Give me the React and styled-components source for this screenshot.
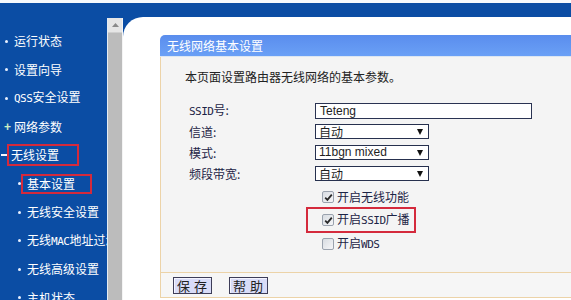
import React from "react";
import styled, { createGlobalStyle } from "styled-components";

const GlobalStyle = createGlobalStyle`
  html, body { margin: 0; padding: 0; background: #f6f9fc; overflow: hidden; }
  body { font-family: "Noto Sans CJK SC", "Liberation Sans", sans-serif; font-size: 12px; }
  * { box-sizing: border-box; }
`;

const BLUE = "#0b4da4";
const RED = "#d42a3c";
const TAN = "#ecd3a8";
const INK = "#1d2446";

const Page = styled.div`
  padding-top: 3px;
  width: 571px;
  height: 300px;
`;

const Frame = styled.div`
  background: ${BLUE};
  height: 297px;
  display: flex;
  flex-direction: column;
`;

const TopBand = styled.div`
  height: 14px;
  flex: none;
`;

const MainRow = styled.div`
  flex: 1;
  display: flex;
  min-height: 0;
`;

const Sidebar = styled.nav`
  width: 107px;
  flex: none;
  overflow: hidden;
  padding-top: 10px;
  color: #fff;
`;

const NavItem = styled.div`
  height: 28.5px;
  display: flex;
  align-items: center;
  white-space: nowrap;
  padding-left: ${(p) => (p.$sub ? 17 : 4)}px;
  line-height: 16px;
`;

const Bullet = styled.span`
  flex: none;
  width: 10px;
  display: flex;
  align-items: center;
  justify-content: flex-start;
  &::before {
    content: "";
    width: 3px;
    height: 3px;
    border-radius: 50%;
    background: #e8f0ff;
    margin-left: 1px;
  }
`;

const Plus = styled.span`
  flex: none;
  width: 10px;
  font-family: "Liberation Sans", sans-serif;
  font-weight: bold;
  font-size: 12px;
  color: #cdeec4;
  line-height: 12px;
`;

const Minus = styled.span`
  flex: none;
  width: 10px;
  margin-left: -3px;
  display: flex;
  align-items: center;
  &::before {
    content: "";
    width: 7px;
    height: 2px;
    background: #f4f8ff;
  }
`;

const NavText = styled.span`
  display: inline-block;
  flex: none;
  white-space: nowrap;
  border: ${(p) => (p.$boxed ? `2px solid ${RED}` : "none")};
  margin-left: ${(p) => (p.$boxed ? -p.$pl - 2 : 0)}px;
  padding: ${(p) => (p.$boxed ? `${p.$pv}px ${p.$pr}px ${p.$pv}px ${p.$pl}px` : "0")};
`;

const Latin = styled.span`
  font-family: "DejaVu Sans Mono", "Liberation Mono", monospace;
  font-size: 11px;
  letter-spacing: -0.5px;
`;

const Scrollbar = styled.div`
  width: 16px;
  flex: none;
  margin-top: 1px;
  border-left: 1px solid #e4ecf4;
  border-right: 1px solid #f4f4f4;
  background: #bcbcbc;
  display: flex;
  flex-direction: column;
`;

const ScrollArrow = styled.div`
  height: 15px;
  background: #e6e6e6;
  display: flex;
  align-items: center;
  justify-content: center;
  border-bottom: 1px solid #d0d0d0;
`;

const Content = styled.main`
  flex: 1;
  background: #fff;
  border-top-left-radius: 20px;
  padding: 18px 0 0 37px;
  overflow: hidden;
`;

const Panel = styled.section`
  display: flex;
  flex-direction: column;
`;

const PanelHeader = styled.header`
  height: 22px;
  border-top-left-radius: 5px;
  background: linear-gradient(#5a8ded, #6aa0f6);
  border-bottom: 1px solid #dbe6f2;
  color: #fff;
  padding-left: 7px;
  display: flex;
  align-items: center;
`;

const PanelBody = styled.div`
  height: 215px;
  background: #f4f4f4;
  border-left: 1px solid ${TAN};
  padding: 11px 0 0 24px;
  color: ${INK};
`;

const Intro = styled.p`
  margin: 0;
  height: 18px;
  line-height: 18px;
  color: #222;
`;

const Form = styled.div`
  margin-top: 14px;
  display: grid;
  grid-template-columns: 126px 1fr;
  grid-auto-rows: 21px;
  align-items: center;
  padding-left: 4px;
`;

const Label = styled.span`
  line-height: 16px;
`;

const TextInput = styled.div`
  width: 217px;
  height: 16px;
  border: 1px solid #2a3352;
  background: #fff;
  font-family: "Liberation Sans", sans-serif;
  font-size: 12px;
  line-height: 14px;
  padding-left: 4px;
  color: #222;
`;

const Select = styled.div`
  width: 114px;
  height: 15px;
  border: 1px solid #26304e;
  background: #fff;
  display: flex;
  align-items: center;
  justify-content: space-between;
  padding: 0 5px 0 3px;
  font-size: 12px;
  color: #1e1e1e;
  line-height: 13px;
  font-family: ${(p) => (p.$latin ? '"Liberation Sans", sans-serif' : "inherit")};
`;

const Arrow = styled.span`
  width: 0;
  height: 0;
  border-left: 3px solid transparent;
  border-right: 3px solid transparent;
  border-top: 6px solid #111;
`;

const Checks = styled.div`
  margin-top: 2px;
  margin-left: 130px;
  display: flex;
  flex-direction: column;
  align-items: flex-start;
`;

const CheckRow = styled.label`
  display: flex;
  align-items: center;
  gap: 3px;
  height: ${(p) => (p.$boxed ? 26 : 22)}px;
  width: ${(p) => (p.$boxed ? "110px" : "auto")};
  margin-left: ${(p) => (p.$boxed ? -9 : 0)}px;
  padding-left: ${(p) => (p.$boxed ? 14 : 7)}px;
  border: ${(p) => (p.$boxed ? `2px solid ${RED}` : "none")};
  margin-top: ${(p) => (p.$boxed ? -1 : 0)}px;
  color: ${INK};
`;

const CheckText = styled.span`
  white-space: nowrap;
  flex: none;
  line-height: 16px;
`;

const Box = styled.span`
  width: 12px;
  height: 12px;
  flex: none;
  border: 1px solid #9aa2ae;
  border-radius: 2px;
  background: linear-gradient(135deg, #d8dce2, #f6f6f8);
  display: flex;
  align-items: center;
  justify-content: center;
`;

const Footer = styled.footer`
  height: 26px;
  border-top: 1px solid ${TAN};
  border-bottom: 1px solid ${TAN};
  border-left: 1px solid ${TAN};
  background: #f6f6f6;
  display: flex;
  align-items: center;
  gap: 17px;
  padding-left: 12px;
`;

const Button = styled.button`
  width: 39px;
  height: 17px;
  padding: 0 0 0 3px;
  border: 1px solid #3d3d58;
  box-shadow: inset 1px 1px 0 #f4f4ff;
  background: #d9dcf8;
  font-family: "Noto Sans CJK SC", sans-serif;
  font-size: 13px;
  letter-spacing: 4px;
  line-height: 15px;
  color: #222;
  display: flex;
  align-items: center;
  justify-content: center;
`;

const nav = [
  { text: "运行状态" },
  { text: "设置向导" },
  { text: <><Latin>QSS</Latin>安全设置</> },
  { text: "网络参数", sign: "+" },
  { text: "无线设置", sign: "-", boxed: { pl: 2, pr: 18, pv: 1 } },
  { text: "基本设置", sub: true, boxed: { pl: 4, pr: 15, pv: 0 } },
  { text: "无线安全设置", sub: true },
  { text: <>无线<Latin>MAC</Latin>地址过滤</>, sub: true },
  { text: "无线高级设置", sub: true },
  { text: "主机状态", sub: true },
];

const Check = ({ checked }) => (
  <Box>
    {checked && (
      <svg width="9" height="9" viewBox="0 0 9 9">
        <path d="M1.2 4.6 L3.4 6.8 L7.8 1.6" fill="none" stroke="#2a2a2a" strokeWidth="1.8" />
      </svg>
    )}
  </Box>
);

const Marker = ({ sign }) =>
  sign === "+" ? <Plus>+</Plus> : sign === "-" ? <Minus /> : <Bullet />;

export default function App() {
  return (
    <>
      <GlobalStyle />
      <Page>
        <Frame>
          <TopBand />
          <MainRow>
            <Sidebar>
              {nav.map((n, i) => (
                <NavItem key={i} $sub={n.sub}>
                  <Marker sign={n.sign} />
                  <NavText
                    $boxed={!!n.boxed}
                    $pl={n.boxed?.pl}
                    $pr={n.boxed?.pr}
                    $pv={n.boxed?.pv}
                  >
                    {n.text}
                  </NavText>
                </NavItem>
              ))}
            </Sidebar>
            <Scrollbar>
              <ScrollArrow>
                <svg width="7" height="4" viewBox="0 0 7 4">
                  <path d="M0 4 L3.5 0 L7 4 Z" fill="#8a8a8a" />
                </svg>
              </ScrollArrow>
            </Scrollbar>
            <Content>
              <Panel>
                <PanelHeader>无线网络基本设置</PanelHeader>
                <PanelBody>
                  <Intro>本页面设置路由器无线网络的基本参数。</Intro>
                  <Form>
                    <Label><Latin>SSID</Latin>号:</Label>
                    <TextInput>Teteng</TextInput>
                    <Label>信道:</Label>
                    <Select>自动<Arrow /></Select>
                    <Label>模式:</Label>
                    <Select $latin>11bgn mixed<Arrow /></Select>
                    <Label>频段带宽:</Label>
                    <Select>自动<Arrow /></Select>
                  </Form>
                  <Checks>
                    <CheckRow><Check checked /><CheckText>开启无线功能</CheckText></CheckRow>
                    <CheckRow $boxed><Check checked /><CheckText>开启<Latin>SSID</Latin>广播</CheckText></CheckRow>
                    <CheckRow><Check /><CheckText>开启<Latin>WDS</Latin></CheckText></CheckRow>
                  </Checks>
                </PanelBody>
                <Footer>
                  <Button>保存</Button>
                  <Button>帮助</Button>
                </Footer>
              </Panel>
            </Content>
          </MainRow>
        </Frame>
      </Page>
    </>
  );
}
